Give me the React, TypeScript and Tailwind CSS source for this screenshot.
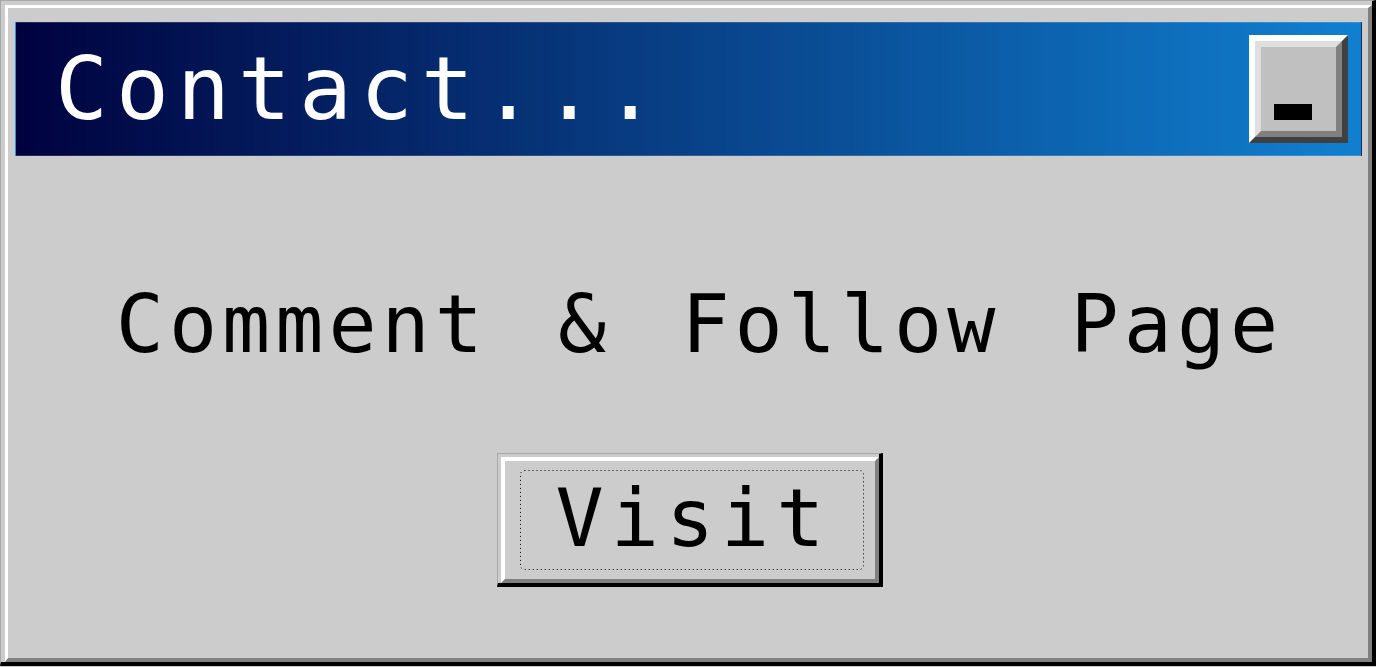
const mono = { fontFamily: '"DejaVu Sans Mono", "Liberation Mono", monospace' };

function MinimizeButton() {
  return (
    <div className="w-[99px] h-[108px] border-[6px] border-t-white border-l-white border-b-[#404040] border-r-[#404040]">
      <div className="w-full h-full border-[6px] border-t-[#dfdfdf] border-l-[#dfdfdf] border-b-[#808080] border-r-[#808080] bg-[#c0c0c0] flex items-end pb-[11px] pl-[13px]">
        <div className="w-[38px] h-[16px] bg-black" />
      </div>
    </div>
  );
}

function VisitButton() {
  return (
    <button className="w-[386px] h-[134px] border-t border-l border-t-[#a8a8a8] border-l-[#a8a8a8] border-r-[4px] border-b-[4px] border-r-black border-b-black bg-[#cccccc] pt-[3px] pl-[3px]">
      <div className="relative w-full h-full border-[4px] border-t-white border-l-white border-b-[#808080] border-r-[#808080] flex items-center justify-center">
        <svg className="absolute left-[15px] top-[9px]" width="345" height="101">
          <rect x="0.5" y="0.5" width="343" height="99" rx="4" fill="none" stroke="#000" strokeWidth="1" strokeDasharray="1 3" />
        </svg>
        <span className="text-[80px] leading-none text-black tracking-[7px] pl-[7px] mt-[-2px]" style={mono}>
          Visit
        </span>
      </div>
    </button>
  );
}

export default function App() {
  return (
    <div className="w-[1376px] h-[667px] bg-[#cccccc]">
      <div className="w-full h-[666px] border-t border-l border-t-[#a8a8a8] border-l-[#a8a8a8] border-r-[4px] border-b-[4px] border-r-black border-b-black pt-[4px] pl-[4px]">
        <div className="w-full h-full border-t-[3px] border-l-[3px] border-t-white border-l-white border-r-[4px] border-b-[4px] border-r-[#808080] border-b-[#808080] bg-[#cccccc] pt-[14px] pl-[7px] pr-[6px] flex flex-col">
          <div className="h-[134px] flex items-center justify-between bg-[linear-gradient(to_right,#00023f,#1080d0)] border border-white/15 pl-[39px] pr-[13px]">
            <span className="text-[88px] leading-none text-white tracking-[8px]" style={mono}>
              Contact...
            </span>
            <MinimizeButton />
          </div>
          <div className="mt-[129px] flex justify-center">
            <span className="text-[80px] leading-none text-black tracking-[5px] [word-spacing:17px] pl-[22px]" style={mono}>
              Comment &amp; Follow Page
            </span>
          </div>
          <div className="mt-[88px] flex justify-center pl-[3px]">
            <VisitButton />
          </div>
        </div>
      </div>
    </div>
  );
}
